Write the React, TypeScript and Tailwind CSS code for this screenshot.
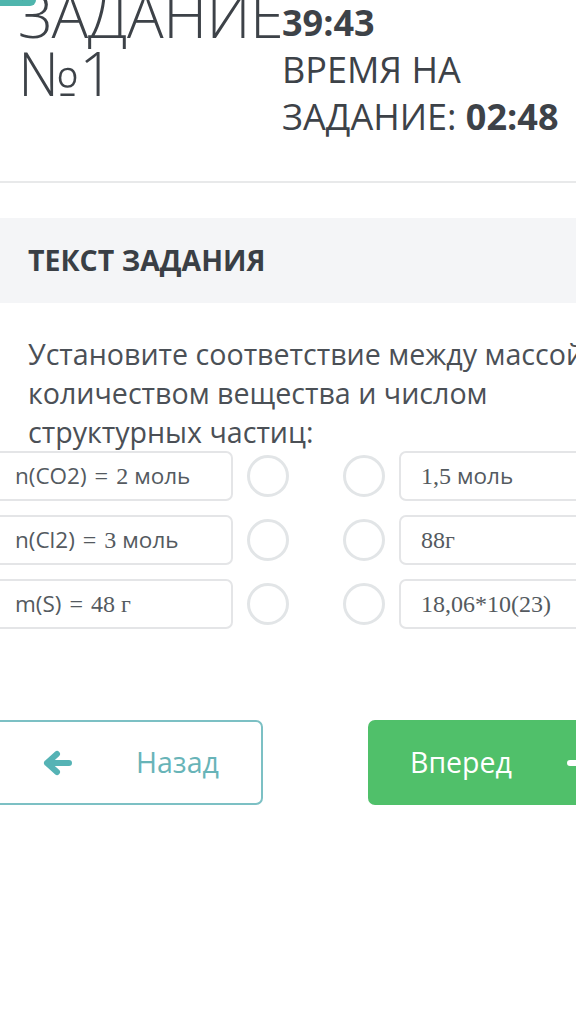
const sans = { fontFamily: '"Open Sans", "Noto Sans", sans-serif' };
const serif = 'font-["Liberation_Serif",serif] text-[24px] whitespace-pre';

const leftItems = [
  { a: 'n(CO2)', n: '2 ', c: 'моль' },
  { a: 'n(Cl2)', n: '3 ', c: 'моль' },
  { a: 'm(S)', n: '48 г', c: '' },
];

const rightItems = [
  { a: '1,5 ', c: 'моль' },
  { a: '88г', c: '' },
  { a: '18,06*10(23)', c: '' },
];

const Circle = () => (
  <div className="w-[42px] h-[42px] shrink-0 rounded-full border-[3px] border-[#e2e5e7] bg-white" />
);

const Arrow = ({ dir, color }: { dir: 'left' | 'right'; color: string }) => (
  <svg
    width="30"
    height="26"
    viewBox="0 0 30 26"
    fill="none"
    stroke={color}
    strokeWidth="6"
    strokeLinecap="round"
    strokeLinejoin="round"
    className={dir === 'right' ? 'rotate-180' : ''}
  >
    <path d="M4 13h22M14 4l-10 9 10 9" />
  </svg>
);

const App = () => {
  return (
    <div className="w-[576px] h-[1018px] overflow-hidden bg-white text-[#3d4248]" style={sans}>
      {/* Header */}
      <div className="h-[6px] w-[36px] rounded-br-[6px] bg-[#4fb5ad]" />
      <div className="flex -mt-[20px]">
        <h1 className="pl-[18px] w-[282px] shrink-0 text-[61px] leading-[58px] font-light tracking-[-0.5px] whitespace-nowrap">
          ЗАДАНИЕ
          <br />
          №1
        </h1>
        <div className="pt-[13px] text-[36px] leading-[47px] font-normal whitespace-nowrap">
          <div className="font-bold">39:43</div>
          <div>ВРЕМЯ НА</div>
          <div>
            ЗАДАНИЕ: <span className="font-bold">02:48</span>
          </div>
        </div>
      </div>

      <div className="mt-[41px] h-[2px] bg-[#e8e9ea]" />

      {/* Task */}
      <div className="mt-[35px] h-[85px] flex items-center pl-[28px] bg-[#f4f5f7]">
        <h2 className="text-[28.5px] font-bold text-[#3a3f45]">ТЕКСТ ЗАДАНИЯ</h2>
      </div>

      <p className="mt-[31px] pl-[28px] w-[610px] text-[28.6px] leading-[39px] text-[#4b5056]">
        Установите соответствие между массой, количеством вещества и числом структурных частиц:
      </p>

      <div className="flex flex-col gap-[14px] text-[22.5px] text-[#545a60]">
        {leftItems.map((l, i) => (
          <div key={i} className="flex items-center">
            <div className="-ml-[10px] w-[243px] h-[50px] shrink-0 flex items-center pl-[23px] rounded-[7px] border-2 border-[#e4e5e7]">
              <span>{l.a}</span>
              <span className={`${serif} px-[8px]`}>=</span>
              <span className={serif}>{l.n}</span>
              <span>{l.c}</span>
            </div>
            <div className="ml-[14px]"><Circle /></div>
            <div className="ml-[54px]"><Circle /></div>
            <div className="ml-[14px] w-[240px] h-[50px] shrink-0 flex items-center pl-[20px] rounded-[7px] border-2 border-[#e4e5e7]">
              <span className={serif}>{rightItems[i].a}</span>
              <span>{rightItems[i].c}</span>
            </div>
          </div>
        ))}
      </div>

      {/* Nav */}
      <div className="mt-[91px] flex items-center">
        <button className="-ml-[30px] w-[293px] h-[85px] shrink-0 flex items-center rounded-[7px] border-2 border-[#7cc0c4] bg-white">
          <span className="ml-[71px]"><Arrow dir="left" color="#55b3b5" /></span>
          <span className="ml-[63px] text-[28.5px] text-[#68b4b8]">Назад</span>
        </button>
        <button className="ml-[105px] w-[260px] h-[85px] shrink-0 flex items-center rounded-[7px] bg-[#50c06a]">
          <span className="ml-[42px] text-[28.5px] text-white">Вперед</span>
          <span className="ml-[54px]"><Arrow dir="right" color="#ffffff" /></span>
        </button>
      </div>
    </div>
  );
};

export default App;
